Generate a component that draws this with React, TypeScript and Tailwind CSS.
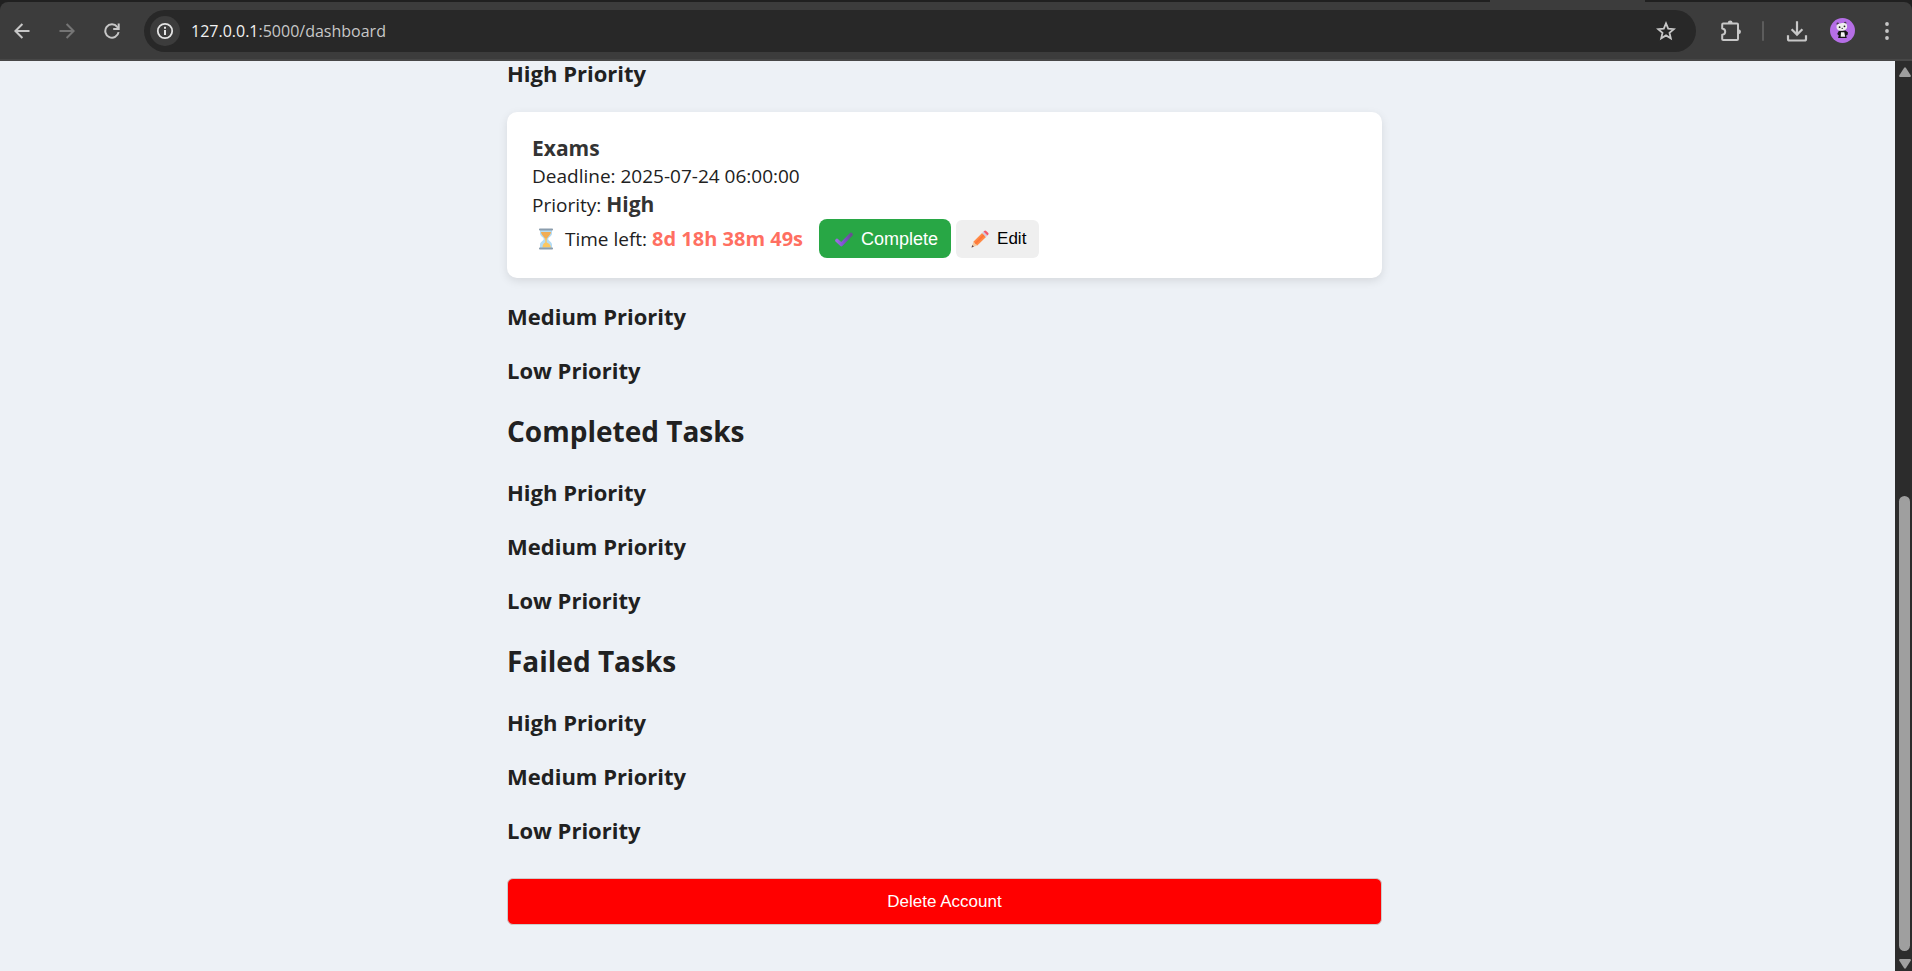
import React from "react";

const h3Class = "text-[22px] leading-8 font-bold text-[#212121]";

function BackIcon() {
  return (
    <svg width="16" height="16" viewBox="0 0 16 16" fill="none" stroke="currentColor" strokeWidth="2">
      <path d="M15.5 8H1.8M8.4 1 1.4 8l7 7" />
    </svg>
  );
}

function ForwardIcon() {
  return (
    <svg width="16" height="16" viewBox="0 0 16 16" fill="none" stroke="currentColor" strokeWidth="2">
      <path d="M.5 8h13.7M7.6 1l7 7-7 7" />
    </svg>
  );
}

function ReloadIcon() {
  return (
    <svg width="16" height="16" viewBox="0 0 16 16" fill="none" stroke="currentColor" strokeWidth="2">
      <path d="M14.6 9.2A6.7 6.7 0 1 1 13.2 3.8L14.6 5.4" />
      <path d="M14.7 .4V6H9.2" />
    </svg>
  );
}

function InfoIcon() {
  return (
    <svg width="18" height="18" viewBox="0 0 18 18" fill="none" stroke="currentColor" strokeWidth="2">
      <circle cx="9" cy="9" r="7.2" strokeWidth="1.8" />
      <path d="M9 8v5M9 4.8v2" />
    </svg>
  );
}

function StarIcon() {
  return (
    <svg width="20" height="20" viewBox="0 0 20 20" fill="none" stroke="currentColor" strokeWidth="1.8">
      <path d="M10 2.4l2.200 5.200 5.600.5-4.300 3.700 1.300 5.500-4.800-2.900-4.800 2.900 1.300-5.500-4.300-3.700 5.600-.5z" />
    </svg>
  );
}

function PuzzleIcon() {
  return (
    <svg width="22" height="22" viewBox="0 0 22 22" fill="none">
      <path
        d="M3.200 3.400H17a1 1 0 0 1 1 1V19a1 1 0 0 1-1 1H3.200a1 1 0 0 1-1-1v-4.200c1.900-.3 3-1.500 3-3.100s-1.100-2.800-3-3.100V4.400a1 1 0 0 1 1-1z"
        stroke="currentColor"
        strokeWidth="2"
        strokeLinejoin="round"
      />
      <path d="M7.800 3a2.400 2.400 0 0 1 4.800 0zM18.500 9.200a2.500 2.500 0 0 1 0 5z" fill="currentColor" />
    </svg>
  );
}

function DownloadIcon() {
  return (
    <svg width="22" height="22" viewBox="0 0 22 22" fill="none" stroke="currentColor" strokeWidth="2.200">
      <path d="M11 1.300v13M5.600 9.200l5.400 5.400 5.400-5.400" />
      <path d="M2 15.200V19a1.500 1.500 0 0 0 1.500 1.500h15A1.500 1.500 0 0 0 20 19v-3.800" />
    </svg>
  );
}

function PandaAvatar() {
  return (
    <svg width="25" height="25" viewBox="0 0 25 25">
      <circle cx="12.500" cy="12.500" r="12.500" fill="#b56ee6" />
      <circle cx="7.700" cy="5.800" r="1.200" fill="#4a3a52" />
      <circle cx="15.200" cy="5" r="1.200" fill="#4a3a52" />
      <path d="M9 12.500h6.500l2.500 2-.5 2.500-1.500.5.800 2.500H8l.8-2.500L7.200 16z" fill="#161616" />
      <path d="M6.700 7.500C7.500 5 15.500 3.800 16.700 6.300c.9 2.200.4 4.500-1.200 5.500-2 1.100-5.500 1.400-7.200.4-1.500-.9-2.200-2.700-1.600-4.700z" fill="#eee" />
      <path d="M11 14.200h3.300l.9 4.600h-4.500z" fill="#f3f3f3" />
      <circle cx="9.600" cy="9.200" r=".9" fill="#222" />
      <circle cx="14.500" cy="8.300" r=".9" fill="#222" />
      <circle cx="12.200" cy="10.400" r=".6" fill="#222" />
    </svg>
  );
}

function DotsIcon() {
  return (
    <svg width="6" height="20" viewBox="0 0 6 20" fill="currentColor">
      <circle cx="3" cy="3" r="1.900" />
      <circle cx="3" cy="10" r="1.900" />
      <circle cx="3" cy="17" r="1.900" />
    </svg>
  );
}

function HourglassIcon() {
  return (
    <svg width="16" height="22" viewBox="0 0 16 22" aria-hidden="true">
      <path d="M2 2h12v3.500c0 2.500-3.800 4-3.800 5.500s3.800 3 3.800 5.500V20H2v-3.500C2 14 5.800 12.500 5.800 11S2 8 2 5.500z" fill="#b4dcf5" />
      <path d="M3 4h10c0 3.200-3.700 4.600-4.200 7.500H7.200C6.700 8.600 3 7.200 3 4z" fill="#f0ad55" />
      <path d="M7.300 10h1.400v4.500c2 .8 4.200 2.500 4.200 5H4.500c0-2.500 1-4.200 2.800-5z" fill="#fcc760" />
      <rect x="1" y=".5" width="14" height="2" rx=".8" fill="#8b9dad" />
      <rect x="1" y="19.500" width="14" height="2" rx=".8" fill="#8b9dad" />
    </svg>
  );
}

function CheckIcon() {
  return (
    <svg width="18" height="16" viewBox="0 0 18 16" aria-hidden="true">
      <defs>
        <linearGradient id="check" x1="0" y1="0" x2="1" y2="0">
          <stop offset="0" stopColor="#9a6be0" />
          <stop offset=".5" stopColor="#7e4fd0" />
          <stop offset="1" stopColor="#66518f" />
        </linearGradient>
      </defs>
      <path d="M2 9.500l4.300 4L16 3.500" fill="none" stroke="url(#check)" strokeWidth="3.600" strokeLinejoin="round" strokeLinecap="round" />
    </svg>
  );
}

function PencilIcon() {
  return (
    <svg width="18" height="18" viewBox="0 0 18 18" aria-hidden="true">
      <path d="M.5 17.500L2.400 11.700 6.300 15.600z" fill="#f3c9a0" />
      <path d="M.5 17.500l.8-2.400 1.600 1.600z" fill="#5b4650" />
      <path d="M2.400 11.700l8.700-8.700L15 6.900l-8.700 8.700z" fill="#ff8a45" />
      <path d="M3.700 13l8.700-8.700 1.300 1.300L5 14.300z" fill="#ff7438" />
      <path d="M11.100 3l1.400-1.400 3.900 3.900L15 6.900z" fill="#cfcbe0" />
      <path d="M12.500 1.600l.7-.7a1.400 1.400 0 0 1 2 0l1.900 1.900a1.400 1.400 0 0 1 0 2l-.7.7z" fill="#f4586c" />
    </svg>
  );
}

function BrowserBar() {
  return (
    <header className="shrink-0 bg-[#202020] font-['Open_Sans',sans-serif]">
      <div className="flex h-0.5">
        <div className="flex-1" />
        <div className="mr-[267px] w-[155px] bg-[#3c3c3c]" />
      </div>
      <div className="flex h-[59px] items-center rounded-t-lg border-b-2 border-[#474747] bg-[#3c3c3c] pr-[22px] pl-3.5 text-[#c7c7c7]">
        <nav className="flex gap-[29px]" aria-label="Browser navigation">
          <button type="button" aria-label="Back"><BackIcon /></button>
          <button type="button" aria-label="Forward" className="text-[#757575]"><ForwardIcon /></button>
          <button type="button" aria-label="Reload"><ReloadIcon /></button>
        </nav>
        <div className="ml-6 flex h-[42px] flex-1 items-center rounded-full bg-[#282828] pr-5 pl-1.5">
          <button type="button" aria-label="View site information" className="flex size-[30px] items-center justify-center rounded-full bg-[#3c3c3c] text-[#e3e3e3]">
            <InfoIcon />
          </button>
          <p className="ml-[11px] flex-1 text-base leading-6 text-[#c7c7c7]">
            <span className="text-[#f1f1f1]">127.0.0.1</span>:5000/dashboard
          </p>
          <button type="button" aria-label="Bookmark this tab"><StarIcon /></button>
        </div>
        <div className="ml-6 flex items-center">
          <button type="button" aria-label="Extensions"><PuzzleIcon /></button>
          <div className="ml-5 h-5 w-0.5 rounded-full bg-[#5c5c5c]" />
          <button type="button" aria-label="Downloads" className="ml-[22px]"><DownloadIcon /></button>
          <button type="button" aria-label="Profile" className="ml-[22px]"><PandaAvatar /></button>
          <button type="button" aria-label="Menu" className="ml-[29px]"><DotsIcon /></button>
        </div>
      </div>
    </header>
  );
}

function Scrollbar() {
  return (
    <div className="flex w-[17px] shrink-0 flex-col items-center bg-[#2c2c2c] pt-1.5 pb-0.5 pl-0.5" aria-hidden="true">
      <svg width="12" height="10" viewBox="0 0 12 10" fill="#9f9f9f"><path d="M5 1Q6-.4 7 1l4.800 7.500Q12 10 11 10H1Q0 10 .2 8.500z" /></svg>
      <div className="flex-[419]" />
      <div className="w-[11px] flex-[454] rounded-full bg-[#9f9f9f]" />
      <div className="h-2" />
      <svg width="12" height="10" viewBox="0 0 12 10" fill="#9f9f9f"><path d="M5 9q1 1.400 2 0l4.800-7.500Q12 0 11 0H1Q0 0 .2 1.500z" /></svg>
    </div>
  );
}

function TaskCard() {
  return (
    <article className="mt-[27px] mb-[22px] rounded-[10px] bg-white px-[25px] pt-[22px] pb-5 text-[19px] leading-7 text-[#212121] shadow-[0_3px_10px_rgba(0,0,0,0.1)]">
      <p className="text-[21px] font-bold text-[#333]">Exams</p>
      <p>Deadline: 2025-07-24 06:00:00</p>
      <p>Priority: <strong className="text-[21px] text-[#333]">High</strong></p>
      <div className="flex items-center">
        <span className="ml-1.5"><HourglassIcon /></span>
        <p className="ml-[11px]">Time left: <strong className="text-xl leading-7 text-[#ff6f61]">8d 18h 38m 49s</strong></p>
        <button type="button" className="ml-4 flex h-[39px] items-center gap-2 rounded-lg bg-[#28a745] px-[13px] pl-4 font-['Liberation_Sans',sans-serif] text-lg text-white">
          <CheckIcon />
          Complete
        </button>
        <button type="button" className="ml-[5px] flex h-[38px] items-center gap-2 rounded-md bg-[#efefef] px-[13px] pl-[15px] font-['Liberation_Sans',sans-serif] text-[17px] text-black">
          <PencilIcon />
          Edit
        </button>
      </div>
    </article>
  );
}

function TaskSection({ title }: { title: string }) {
  return (
    <section>
      <h2 className="my-[25px] text-[28px] leading-10 font-bold text-[#212121]">{title}</h2>
      <div className="flex flex-col gap-[22px]">
        <h3 className={h3Class}>High Priority</h3>
        <h3 className={h3Class}>Medium Priority</h3>
        <h3 className={h3Class}>Low Priority</h3>
      </div>
    </section>
  );
}

export default function App() {
  return (
    <div className="flex min-h-screen flex-col bg-[#edf1f6]">
      <BrowserBar />
      <div className="flex flex-1">
        <main className="flex-1 pr-1.5 pb-11 font-['Open_Sans',sans-serif]">
          <div className="mx-auto max-w-[875px]">
            <h3 className="text-[22px] leading-6 font-bold text-[#212121]">High Priority</h3>
            <TaskCard />
            <div className="flex flex-col gap-[22px]">
              <h3 className={h3Class}>Medium Priority</h3>
              <h3 className={h3Class}>Low Priority</h3>
            </div>
            <TaskSection title="Completed Tasks" />
            <TaskSection title="Failed Tasks" />
            <button type="button" className="mt-8 h-[47px] w-full rounded-md border border-[#ccc] bg-[#f00] font-['Liberation_Sans',sans-serif] text-[17px] text-white">
              Delete Account
            </button>
          </div>
        </main>
        <Scrollbar />
      </div>
    </div>
  );
}
